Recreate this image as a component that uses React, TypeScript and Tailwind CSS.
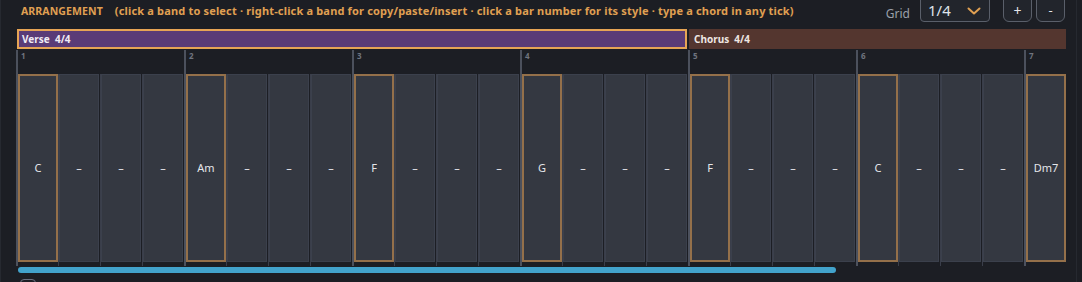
const chords = ["C", "Am", "F", "G", "F", "C", "Dm7"];

const hint =
  "(click a band to select · right-click a band for copy/paste/insert · click a bar number for its style · type a chord in any tick)";

function Slot({ bar, beat, chord }: { bar: number; beat: number; chord: string }) {
  const isBar = beat === 0;
  return (
    <div className="flex w-[42px] h-[216px]">
      {isBar ? (
        <div className="w-[2px] h-full bg-[#4c515d]" />
      ) : (
        <div className="w-px h-[192px] self-end bg-[#3a3e4a]" />
      )}
      <div className="flex flex-col">
        <div className="h-[24px] pl-[3px] pt-[2px] text-[8px] font-bold leading-none text-[#6f747f]">
          {isBar ? bar + 1 : ""}
        </div>
        <div
          className={
            isBar
              ? "w-[40px] h-[188px] bg-[#343841] border-2 border-[#94704a] flex items-center justify-center text-[11px] text-[#e4e6ea]"
              : "w-[40px] h-[188px] bg-[#343841] border border-[#3b404c] flex items-center justify-center text-[11px] text-[#e4e6ea]"
          }
        >
          {isBar ? chord : "–"}
        </div>
      </div>
    </div>
  );
}

export default function App() {
  // the last bar is only partly in view, so only its first tick is drawn
  return (
    <div className="w-[1082px] h-[282px] bg-[#1c1e24] overflow-hidden" style={{ fontFamily: '"Noto Sans", "Open Sans", sans-serif' }}>
      <div className="w-[1077px] h-[282px] border-l border-r border-[#262930]">
        {/* header */}
        <div className="flex items-center h-[22px] pl-[20px] pt-px">
          <span className="text-[10.5px] font-bold text-[#e0a052] tracking-[0.1px]">ARRANGEMENT</span>
          <span className="ml-[12px] text-[11px] font-bold text-[#e0a052] tracking-[0.17px]">{hint}</span>
          <div className="ml-auto flex items-start self-start -mt-[7px] mr-[11px]">
            <span className="mt-[11px] text-[12px] text-[#9aa0aa]">Grid</span>
            <div className="ml-[10px] w-[70px] h-[28px] rounded-[4px] border border-[#5a5f6a] bg-[#22252c] flex items-center pl-[7px] pt-[5px]">
              <span className="text-[15px] text-[#dfe3ea] leading-none">1/4</span>
              <svg width="14" height="8" viewBox="0 0 14 8" className="ml-auto mr-[8px]">
                <polyline points="1.5,1.5 7,6.5 12.5,1.5" fill="none" stroke="#e0a052" strokeWidth="2" strokeLinecap="round" strokeLinejoin="round" />
              </svg>
            </div>
            <button className="ml-[13px] w-[29px] h-[28px] rounded-[6px] border border-[#5a5f6a] bg-[#22252c] text-[14px] leading-none text-[#e4e6ea] pt-[5px]">
              +
            </button>
            <button className="ml-[4px] w-[29px] h-[28px] rounded-[6px] border border-[#5a5f6a] bg-[#22252c] text-[13px] leading-none text-[#e4e6ea] pt-[5px]">
              -
            </button>
          </div>
        </div>

        {/* timeline */}
        <div className="ml-[15px] mt-[7px] w-[1050px] overflow-hidden">
          <div className="w-[1050px]">
            <div className="flex gap-[2px] pl-px h-[21px]">
              <div className="shrink-0 w-[670px] h-[20px] bg-[#5a3b77] border-2 border-[#e6a455] flex items-center pl-[3px] text-[10px] font-bold text-[#f0ecf4]">
                Verse&nbsp;&nbsp;4/4
              </div>
              <div className="shrink-0 w-[377px] h-[20px] bg-[#54362f] flex items-center pl-[5px] text-[10px] font-bold text-[#eee6e2]">
                Chorus&nbsp;&nbsp;4/4
              </div>
            </div>
            <div className="flex">
              {chords.map((c, bar) => (
                <div key={bar} className="flex shrink-0">
                  {(bar === 6 ? [0] : [0, 1, 2, 3]).map((beat) => (
                    <Slot key={beat} bar={bar} beat={beat} chord={c} />
                  ))}
                </div>
              ))}
            </div>
            <div className="ml-[2px] mt-px h-[6px] w-[818px] rounded-full bg-[#42a3cc]" />
          </div>
        </div>

        <div className="ml-[19px] mt-[6px] w-[16px] h-[16px] rounded-[4px] border border-[#6b7080]" />
      </div>
    </div>
  );
}
